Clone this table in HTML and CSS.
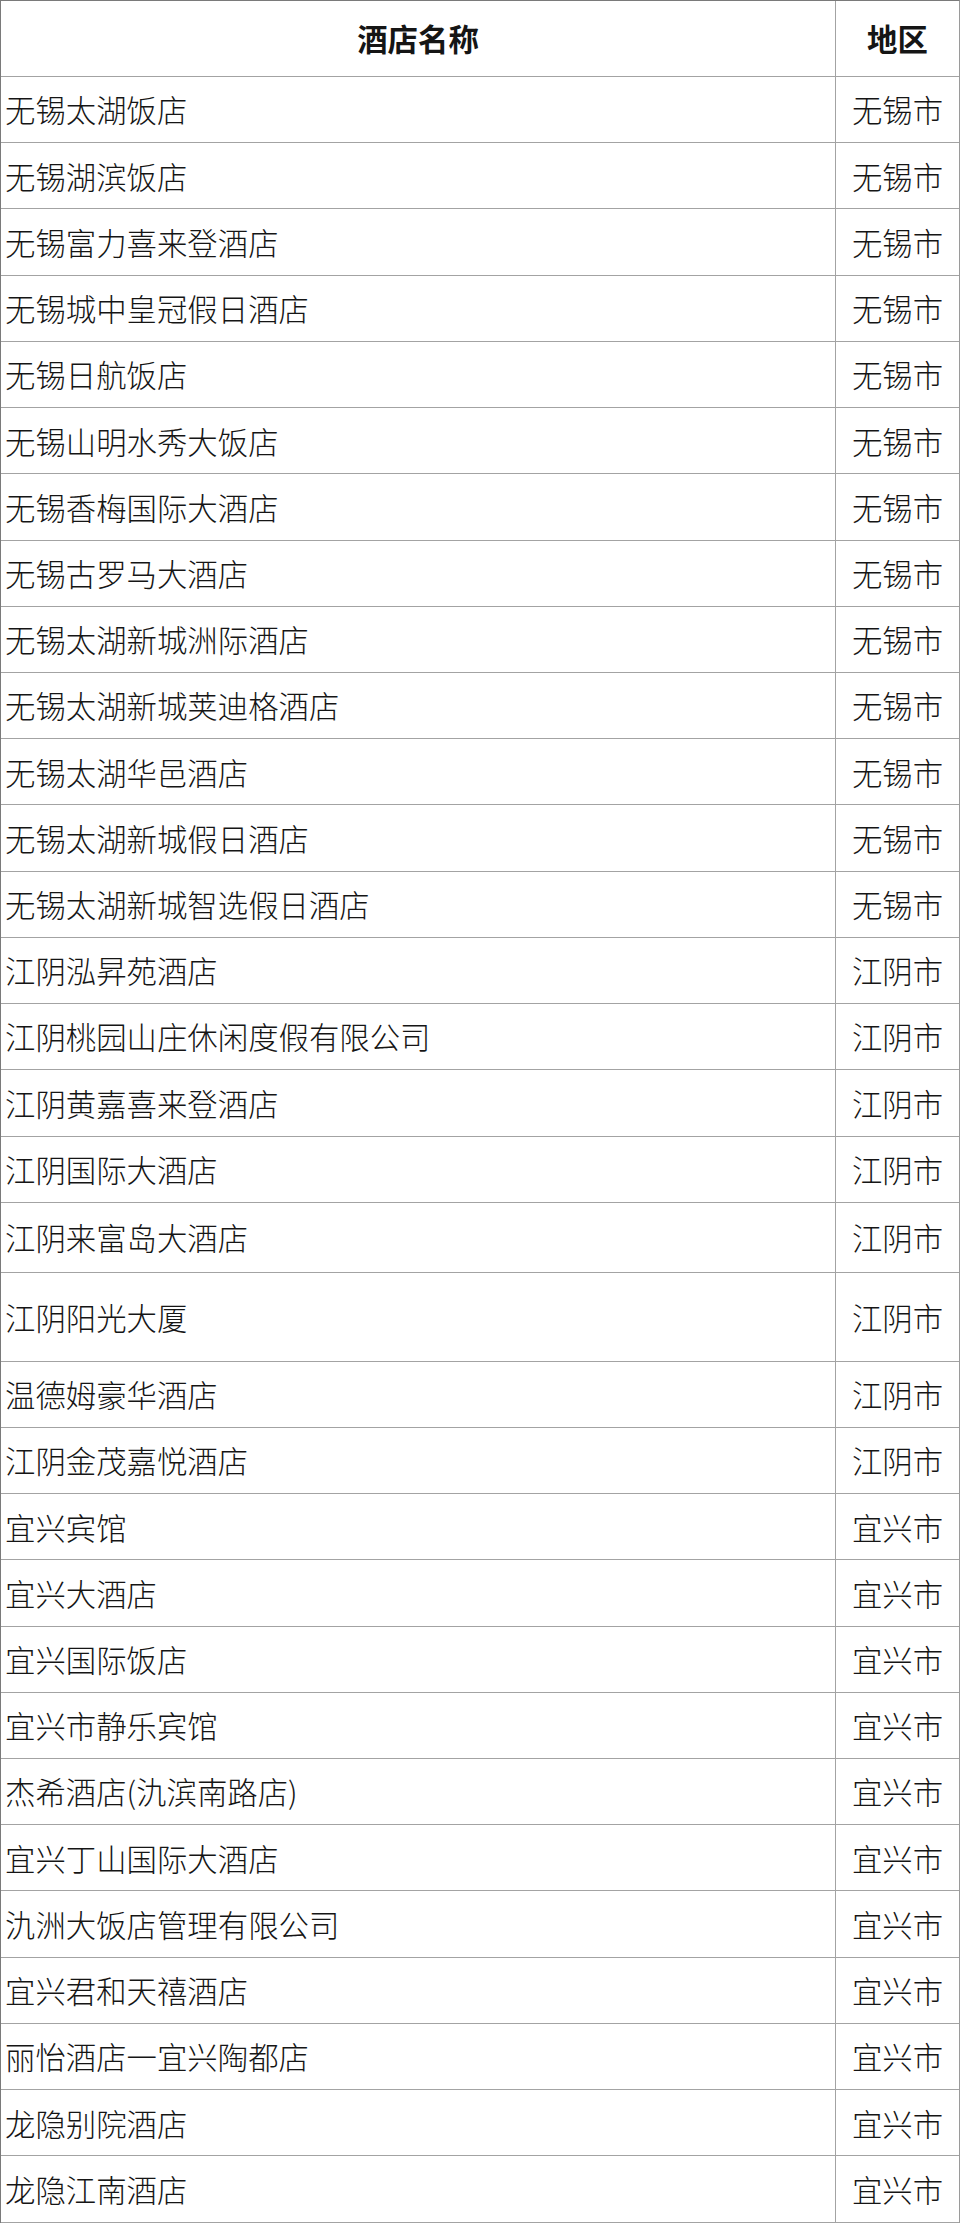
FILE: index.html
```html
<!DOCTYPE html>
<html lang="zh-CN">
<head>
<meta charset="utf-8">
<title>酒店名单</title>
<link rel="stylesheet" href="styles.css">
</head>
<body>
<div class="table">
  <div class="row head"><div class="name">酒店名称</div><div class="area">地区</div></div>
  <div class="row"><div class="name">无锡太湖饭店</div><div class="area">无锡市</div></div>
  <div class="row"><div class="name">无锡湖滨饭店</div><div class="area">无锡市</div></div>
  <div class="row"><div class="name">无锡富力喜来登酒店</div><div class="area">无锡市</div></div>
  <div class="row"><div class="name">无锡城中皇冠假日酒店</div><div class="area">无锡市</div></div>
  <div class="row"><div class="name">无锡日航饭店</div><div class="area">无锡市</div></div>
  <div class="row"><div class="name">无锡山明水秀大饭店</div><div class="area">无锡市</div></div>
  <div class="row"><div class="name">无锡香梅国际大酒店</div><div class="area">无锡市</div></div>
  <div class="row"><div class="name">无锡古罗马大酒店</div><div class="area">无锡市</div></div>
  <div class="row"><div class="name">无锡太湖新城洲际酒店</div><div class="area">无锡市</div></div>
  <div class="row"><div class="name">无锡太湖新城荚迪格酒店</div><div class="area">无锡市</div></div>
  <div class="row"><div class="name">无锡太湖华邑酒店</div><div class="area">无锡市</div></div>
  <div class="row"><div class="name">无锡太湖新城假日酒店</div><div class="area">无锡市</div></div>
  <div class="row"><div class="name">无锡太湖新城智选假日酒店</div><div class="area">无锡市</div></div>
  <div class="row"><div class="name">江阴泓昇苑酒店</div><div class="area">江阴市</div></div>
  <div class="row"><div class="name">江阴桃园山庄休闲度假有限公司</div><div class="area">江阴市</div></div>
  <div class="row"><div class="name">江阴黄嘉喜来登酒店</div><div class="area">江阴市</div></div>
  <div class="row"><div class="name">江阴国际大酒店</div><div class="area">江阴市</div></div>
  <div class="row mid"><div class="name">江阴来富岛大酒店</div><div class="area">江阴市</div></div>
  <div class="row tall"><div class="name">江阴阳光大厦</div><div class="area">江阴市</div></div>
  <div class="row"><div class="name">温德姆豪华酒店</div><div class="area">江阴市</div></div>
  <div class="row"><div class="name">江阴金茂嘉悦酒店</div><div class="area">江阴市</div></div>
  <div class="row"><div class="name">宜兴宾馆</div><div class="area">宜兴市</div></div>
  <div class="row"><div class="name">宜兴大酒店</div><div class="area">宜兴市</div></div>
  <div class="row"><div class="name">宜兴国际饭店</div><div class="area">宜兴市</div></div>
  <div class="row"><div class="name">宜兴市静乐宾馆</div><div class="area">宜兴市</div></div>
  <div class="row"><div class="name">杰希酒店(氿滨南路店)</div><div class="area">宜兴市</div></div>
  <div class="row"><div class="name">宜兴丁山国际大酒店</div><div class="area">宜兴市</div></div>
  <div class="row"><div class="name">氿洲大饭店管理有限公司</div><div class="area">宜兴市</div></div>
  <div class="row"><div class="name">宜兴君和天禧酒店</div><div class="area">宜兴市</div></div>
  <div class="row"><div class="name">丽怡酒店一宜兴陶都店</div><div class="area">宜兴市</div></div>
  <div class="row"><div class="name">龙隐别院酒店</div><div class="area">宜兴市</div></div>
  <div class="row"><div class="name">龙隐江南酒店</div><div class="area">宜兴市</div></div>
</div>
</body>
</html>
```

FILE: styles.css
```css
html, body {
  margin: 0;
  padding: 0;
  background: #ffffff;
}

body {
  font-family: "Noto Sans CJK SC", "Noto Sans", sans-serif;
  color: #151515;
  font-size: 30.4px;
  font-weight: 300;
}

.table {
  width: 960px;
  box-sizing: border-box;
  border-top: 1px solid #7a7a7a;
  border-left: 1px solid #7a7a7a;
  border-right: 1px solid #9a9a9a;
}

.row {
  display: flex;
  height: 66.23px;
  box-sizing: border-box;
  border-bottom: 1px solid #a3a3a3;
}

.row.head {
  height: 76px;
  font-weight: 700;
}

.row.mid {
  height: 70px;
}

.row.tall {
  height: 89px;
}

.name {
  width: 835px;
  flex: none;
  box-sizing: border-box;
  border-right: 1px solid #a3a3a3;
  display: flex;
  align-items: center;
  padding-left: 4px;
  line-height: 1;
  white-space: nowrap;
}

.area {
  flex: 1;
  display: flex;
  align-items: center;
  justify-content: center;
  line-height: 1;
  white-space: nowrap;
}

.head .name {
  justify-content: center;
  padding-left: 0;
}
```
